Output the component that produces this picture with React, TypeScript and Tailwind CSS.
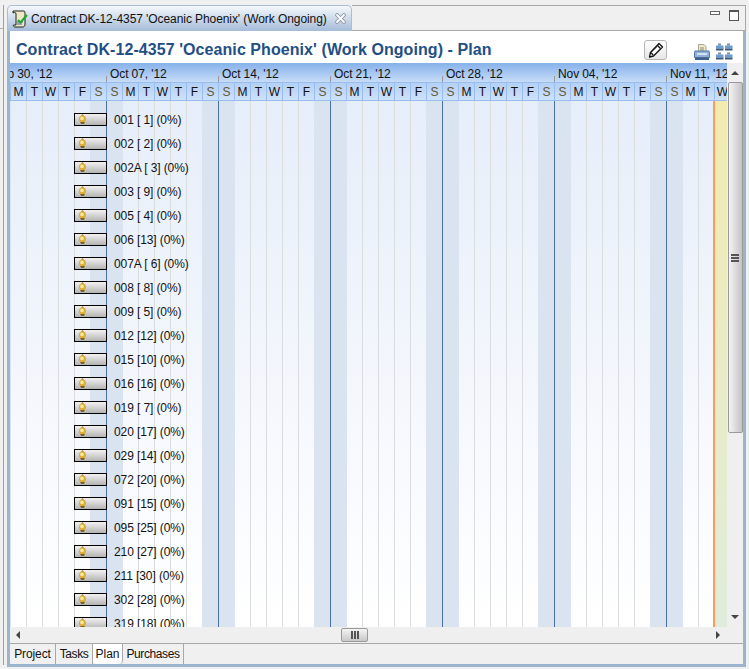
import React from "react";

const rows = [
  "001 [ 1] (0%)", "002 [ 2] (0%)", "002A [ 3] (0%)", "003 [ 9] (0%)", "005 [ 4] (0%)", "006 [13] (0%)",
  "007A [ 6] (0%)", "008 [ 8] (0%)", "009 [ 5] (0%)", "012 [12] (0%)", "015 [10] (0%)", "016 [16] (0%)",
  "019 [ 7] (0%)", "020 [17] (0%)", "029 [14] (0%)", "072 [20] (0%)", "091 [15] (0%)", "095 [25] (0%)",
  "210 [27] (0%)", "211 [30] (0%)", "302 [28] (0%)", "319 [18] (0%)",
];
const weeks = ["Sep 30, '12", "Oct 07, '12", "Oct 14, '12", "Oct 21, '12", "Oct 28, '12", "Nov 04, '12", "Nov 11, '12"];
const dayNames = ["S", "M", "T", "W", "T", "F", "S"];
// the strip starts on the Sunday before the first visible Monday
const days = Array.from({ length: 48 }, (_, i) => dayNames[i % 7]);

const Ball = () => (
  <svg width="11" height="11" viewBox="0 0 11 11" className="absolute left-[2px] top-0">
    <path d="M5.5 0 L7 2 L4 2 Z" fill="#a07a20" />
    <circle cx="5.5" cy="5" r="3.6" fill="#dfae38" />
    <circle cx="5" cy="4.4" r="1.8" fill="#fbeaa0" />
    <path d="M3 8 L8 8 L6.8 10 L4.2 10 Z" fill="#7d6420" />
  </svg>
);

const ScrollIcon = () => (
  <svg width="18" height="18" viewBox="0 0 18 18">
    <path d="M2 1 H13 C14 1 14 3 14 4 V14 C14 16 13 17 12 17 H4 C3 17 2 16 2.5 15 H5 V4 C5 2.5 4 2 2 3 Z" fill="#efe8c4" stroke="#222" strokeWidth="1" />
    <path d="M6 12 H12 M6 14 H11" stroke="#3a5fb0" strokeWidth="1" />
    <path d="M7 10 L9.5 12.5 L16 5" stroke="#1fa82e" strokeWidth="2" fill="none" />
  </svg>
);

const CloseIcon = () => (
  <svg width="11" height="11" viewBox="0 0 11 11">
    <path d="M2 2 L9 9 M9 2 L2 9" stroke="#8a95a5" strokeWidth="3.6" strokeLinecap="round" />
    <path d="M2 2 L9 9 M9 2 L2 9" stroke="#fff" strokeWidth="1.8" strokeLinecap="round" />
  </svg>
);

const Pencil = () => (
  <svg width="16" height="16" viewBox="0 0 16 16">
    <path d="M11 1.5 L14.5 5 L5.5 14 L1.5 15 L2.5 10.5 Z" fill="#fff" stroke="#111" strokeWidth="1.3" strokeLinejoin="round" />
    <path d="M9.5 3.5 L12.5 6.5 M3 10.8 L5.2 13" stroke="#111" strokeWidth="1.3" />
    <path d="M4 10 L10.5 3.5" stroke="#777" strokeWidth="1" />
  </svg>
);

const Printer = () => (
  <svg width="16" height="17" viewBox="0 0 16 17">
    <path d="M4.5 0.5 H10 L12 2.5 V8 H4.5 Z" fill="#f0e8c8" stroke="#a8a690" />
    <path d="M6 4 H10 M6 6 H10" stroke="#8a8a80" />
    <path d="M1 7 H15 C15.5 7 15.5 8 15.5 8.5 V13.5 H0.5 V8.5 C0.5 8 0.5 7 1 7 Z" fill="#8fb0d8" stroke="#53779f" />
    <rect x="1" y="13.5" width="14" height="2.5" fill="#3f6390" />
    <path d="M3 10 H13" stroke="#e8f0f8" strokeWidth="1.5" />
  </svg>
);

const Blocks = () => (
  <svg width="17" height="17" viewBox="0 0 17 17">
    {[0, 9].map((x) =>
      [0, 9].map((y) => (
        <g key={`${x}-${y}`}>
          <path d={`M${x + 2} ${y + 0.5} h3 v2 h-3 z`} fill="#7f8b98" />
          <rect x={x} y={y + 2.5} width="7.5" height="3" fill="#6b9bd0" />
          <rect x={x} y={y + 5.5} width="7.5" height="2" fill="#3c5a80" />
        </g>
      )),
    )}
  </svg>
);

const Arrow = ({ dir }: { dir: "up" | "down" | "left" | "right" }) => {
  const d = {
    up: "M0 5 L4 1 L8 5 Z",
    down: "M0 1 L8 1 L4 5 Z",
    left: "M5 0 L5 8 L1 4 Z",
    right: "M1 0 L5 4 L1 8 Z",
  }[dir];
  return (
    <svg width="8" height="8" viewBox="0 0 8 8">
      <path d={d} fill="#444" />
    </svg>
  );
};

const BottomTab = ({ label, className }: { label: string; className: string }) => (
  <div className={`h-[20px] flex items-center justify-center border-r border-[#a8a8a8] ${className}`}>
    {label}
  </div>
);

export default function App() {
  return (
    <div className="w-[749px] h-[669px] bg-[#f0f0f0] flex overflow-hidden text-[12px] text-[#111] font-['Liberation_Sans',sans-serif]">
      {/* neighbour view edge */}
      <div className="w-[4px] mt-[5px] h-[660px] shrink-0 border-r border-[#a0a0a0]">
        <div className="h-[24px] border-b border-[#b0b0b0]" />
      </div>
      <div className="w-[3px] shrink-0" />

      {/* Editor */}
      <div className="w-[739px] h-[662px] mt-[5px] shrink-0 flex flex-col">
        {/* Tab strip */}
        <div className="h-[26px] shrink-0 flex">
          <div className="w-[345px] rounded-t-[5px] border border-b-0 border-[#a9bed6] bg-gradient-to-b from-[#f6f9fc] to-[#a5bcd8] flex items-center pl-[3px] gap-[2px]">
            <ScrollIcon />
            <span className="w-[296px] whitespace-nowrap tracking-[-0.08px]">Contract DK-12-4357 'Oceanic Phoenix' (Work Ongoing)</span>
            <div className="ml-[6px] flex">
              <CloseIcon />
            </div>
          </div>
          <div className="flex-1 border-t border-r border-[#a8a8a8] flex justify-end pt-[4px] pr-[3px] gap-[9px] h-[26px] border-b border-b-[#a8a8a8]">
            <div className="w-[10px] h-[4px] mt-[1px] border border-[#666] bg-white" />
            <div className="w-[10px] h-[11px] border border-[#555] border-t-2 mr-[3px] bg-white" />
          </div>
        </div>

        <div className="flex-1 min-h-0 border-x-[3px] border-b-[3px] border-[#9db4cf] flex flex-col">
          {/* Form heading */}
          <div className="h-[32px] shrink-0 bg-white flex items-center pl-[6px] pr-[10px]">
            <h1 className="flex-1 text-[16px] tracking-[0.07px] font-bold text-[#1f4f85] whitespace-nowrap pt-[6px]">
              Contract DK-12-4357 'Oceanic Phoenix' (Work Ongoing) - Plan
            </h1>
            <div className="w-[23px] h-[20px] mt-[6px] mr-[1px] rounded-[3px] border border-[#b5b5b5] bg-gradient-to-b from-white to-[#e6e6e6] flex items-center justify-center">
              <Pencil />
            </div>
            <div className="ml-[26px] mt-[11px]">
              <Printer />
            </div>
            <div className="ml-[6px] mt-[9px]">
              <Blocks />
            </div>
          </div>

          <div className="flex-1 min-h-0 flex">
            {/* Gantt */}
            <div className="w-[717px] shrink-0 flex flex-col overflow-hidden">
              <div className="h-[19px] shrink-0 flex -ml-[16px] bg-gradient-to-b from-[#86b1ea] to-[#c6dcf7]">
                {weeks.map((w, i) => (
                  <div key={w} className={`shrink-0 flex items-end ${i === 0 ? "w-[117px] -ml-[5px]" : "w-[112px]"}`}>
                    <div className="w-px h-[6px] bg-[#9a9a90]" />
                    <span className="ml-[3px] whitespace-nowrap leading-[15px] tracking-[-0.1px]">{w}</span>
                  </div>
                ))}
              </div>
              <div className="h-[19px] shrink-0 flex -ml-[16px] bg-gradient-to-b from-[#b4d0f3] to-[#cfe1f9] border-y border-[#98bdee]">
                {days.map((d, i) => (
                  <div
                    key={i}
                    className={`w-[16px] shrink-0 text-center border-l border-[#98bdee] leading-[18px] ${
                      d === "S" ? "text-[#5e5a3e]" : "text-[#111]"
                    }`}
                  >
                    {d}
                  </div>
                ))}
              </div>
              <div className="relative flex-1 min-h-0 overflow-hidden flex -ml-[16px] bg-gradient-to-b from-[#e6eefa] to-white">
                {days.map((d, i) => (
                  <div
                    key={i}
                    className={`w-[16px] shrink-0 border-l ${i > 0 && d === "S" ? "bg-[#dae4f1]" : ""} ${
                      i % 7 === 0
                        ? "border-l-[#46709f]"
                        : d === "S"
                          ? "border-l-[#dae4f1]"
                          : i % 7 === 1
                            ? "border-l-[#dae4f1]"
                            : "border-l-[#dcdcdc]"
                    }`}
                  />
                ))}
                {/* today marker and remaining period */}
                <div className="absolute left-[719px] top-0 bottom-0 w-[14px] border-l-2 border-[#ff9a58] bg-gradient-to-b from-[#f1ebb0] to-[#e0ecdb]" />
                <div className="absolute left-[16px] top-[12px] flex flex-col">
                  {rows.map((r) => (
                    <div key={r} className="h-[24px] flex items-start">
                      <div className="relative ml-[64px] w-[33px] h-[13px] border border-black bg-gradient-to-b from-[#f2f2f2] to-[#b4b4b4]">
                        <Ball />
                      </div>
                      <span className="ml-[7px] leading-[15px] whitespace-nowrap tracking-[-0.1px]">{r}</span>
                    </div>
                  ))}
                </div>
              </div>
            </div>

            {/* Vertical scrollbar */}
            <div className="w-[16px] shrink-0 bg-[#efefef] flex flex-col items-center">
              <div className="h-[19px] shrink-0 flex items-center justify-center pt-[2px]">
                <Arrow dir="up" />
              </div>
              <div className="w-[15px] h-[351px] shrink-0 rounded-[2px] border border-[#9a9a9a] bg-gradient-to-r from-[#f4f4f4] to-[#c4c4c4] flex items-center justify-center">
                <div className="w-[8px] h-[8px] flex flex-col justify-between">
                  <div className="h-[2px] bg-[#555]" />
                  <div className="h-[2px] bg-[#555]" />
                  <div className="h-[2px] bg-[#555]" />
                </div>
              </div>
              <div className="flex-1 flex items-end pb-[5px]">
                <Arrow dir="down" />
              </div>
            </div>
          </div>

          {/* Horizontal scrollbar */}
          <div className="h-[17px] shrink-0 flex items-center bg-[#efefef] border-b border-[#a8a8a8] pl-[5px] pr-[20px]">
            <Arrow dir="left" />
            <div className="ml-[318px] w-[27px] h-[14px] rounded-[2px] border border-[#9a9a9a] bg-gradient-to-b from-[#f4f4f4] to-[#c8c8c8] flex items-center justify-center gap-[1px]">
              <div className="w-[2px] h-[8px] bg-[#555]" />
              <div className="w-[2px] h-[8px] bg-[#555]" />
              <div className="w-[2px] h-[8px] bg-[#555]" />
            </div>
            <div className="ml-auto">
              <Arrow dir="right" />
            </div>
          </div>

          {/* Page tabs */}
          <div className="h-[20px] shrink-0 flex items-start">
            <BottomTab label="Project" className="w-[46px] tracking-[-0.1px]" />
            <BottomTab label="Tasks" className="w-[37px] tracking-[-0.4px]" />
            <BottomTab label="Plan" className="w-[30px] bg-white rounded-b-[4px]" />
            <BottomTab label="Purchases" className="w-[61px] tracking-[-0.4px]" />
          </div>
        </div>
      </div>
    </div>
  );
}
